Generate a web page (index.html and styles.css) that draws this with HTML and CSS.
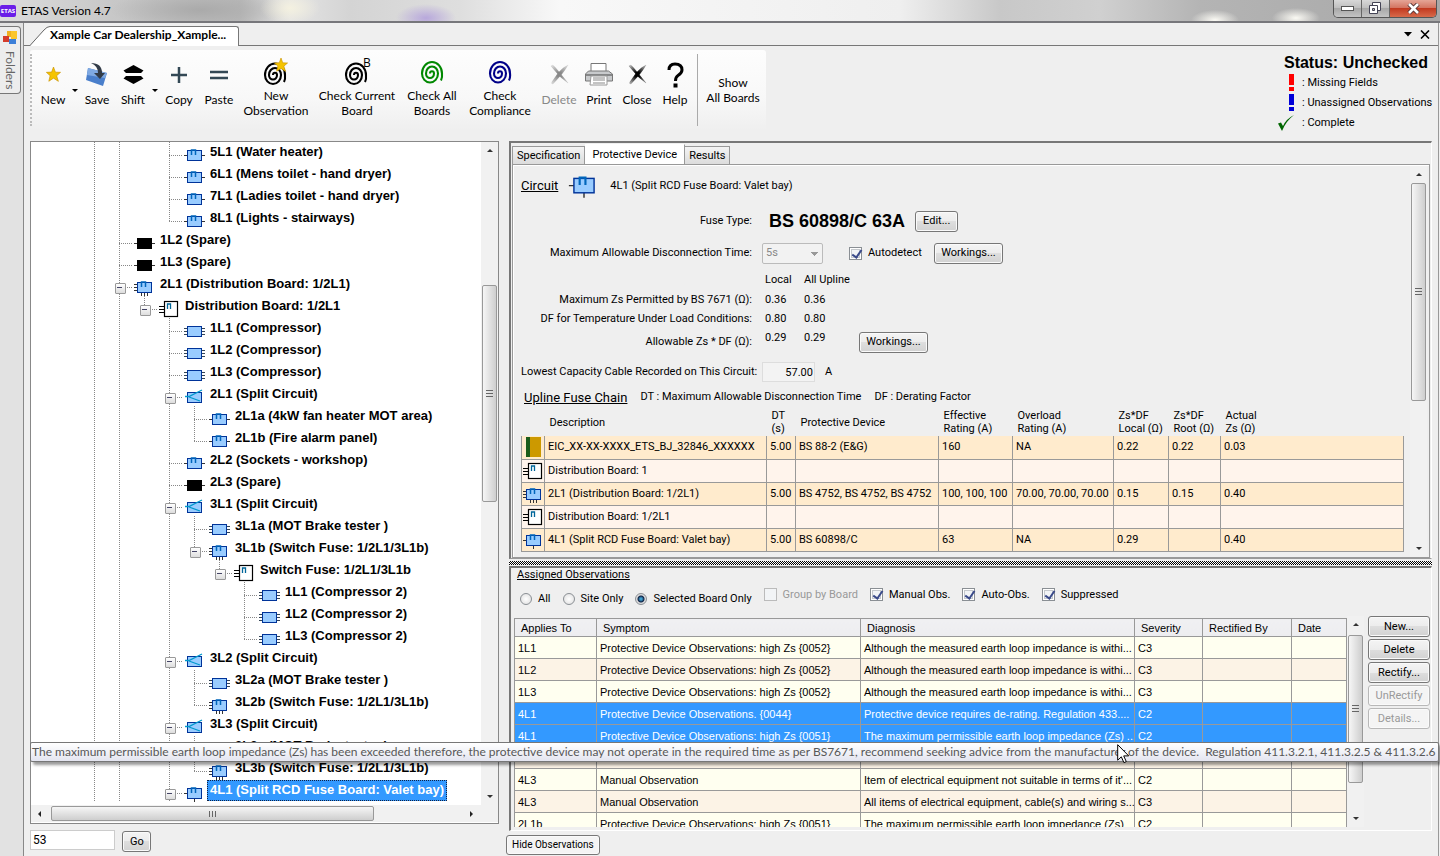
FILE: index.html
```html
<!DOCTYPE html>
<html lang="en">
<head>
<meta charset="utf-8">
<title>ETAS Version 4.7</title>
<link rel="stylesheet" href="styles.css">
</head>
<body>
<svg class="defs" aria-hidden="true">
  <symbol id="circuit" viewBox="0 0 25 22"><path d="M2 13.5h21" stroke="#333"/><rect x="5.5" y="8.5" width="14" height="10" fill="#9cf" stroke="#039"/><path d="M9.500 13V8h4v5" fill="none" stroke="#06b" stroke-width="1.500"/></symbol>
  <symbol id="way" viewBox="0 0 25 22"><path d="M2 10.500h21M2 13.500h21M2 16.500h21" stroke="#345"/><rect x="5.500" y="8.500" width="14" height="10" fill="#9cf" stroke="#039"/></symbol>
  <symbol id="dist" viewBox="0 0 25 22"><path d="M2 10.500h4M2 13.500h4M2 16.500h4M9.500 18v4M12.500 18v4M15.500 18v4" stroke="#333"/><rect x="5.500" y="8.500" width="14" height="10" fill="#9cf" stroke="#039"/><path d="M9.500 13V8h4v5" fill="none" stroke="#06b" stroke-width="1.500"/></symbol>
  <symbol id="single" viewBox="0 0 25 22"><path d="M2 13.500h4M12.500 18v4" stroke="#333"/><rect x="5.500" y="8.500" width="14" height="10" fill="#9cf" stroke="#039"/><path d="M9.500 13V8h4v5" fill="none" stroke="#06b" stroke-width="1.500"/></symbol>
  <symbol id="split" viewBox="0 0 25 22"><rect x="5.500" y="8.500" width="14" height="10" fill="#9cf" stroke="#039"/><path d="M3 12.500h4L20 6M7 13l11 4" fill="none" stroke="#09c" stroke-width="1.300"/></symbol>
  <symbol id="spare" viewBox="0 0 25 22"><path d="M2 13.500h21" stroke="#333"/><rect x="5" y="8" width="15" height="11"/></symbol>
  <symbol id="board" viewBox="0 0 25 22"><path d="M2 10.500h5M2 13.500h5M2 16.500h5" stroke="#000"/><rect x="7.500" y="5.500" width="13" height="15" fill="#fff" stroke="#000" stroke-width="1.200"/><path d="M10.500 13V8h3v5" fill="none" stroke="#069" stroke-width="1.300"/></symbol>
  <symbol id="spiral" viewBox="0 0 24 25"><path d="M10 13A2 2.300 0 0 1 14 13A4 4.500 0 0 1 6 13A6 7 0 0 1 18 13A8 9 0 0 1 2 13A10 11.500 0 0 1 22 13Q22.500 17 21 20" fill="none" stroke="currentColor" stroke-width="2.100"/></symbol>
  <symbol id="star" viewBox="0 0 16 16"><path d="M8 0l2 5.500 5.500.2-4.200 3.600 1.900 6-5.200-3.400L3 15.200l1.400-6L.4 5.700 6 5.400z" fill="#f5c400" stroke="#c99200" stroke-width=".7"/></symbol>
  <radialGradient id="fade" gradientUnits="userSpaceOnUse" cx="10" cy="11" r="13"><stop offset="0.2" stop-color="#000"/><stop offset="1" stop-color="#000" stop-opacity=".2"/></radialGradient>
  <symbol id="cross" viewBox="0 0 20 22"><path d="M1 2Q3 0 5 3L19 20 11 13.500Q7 9 1 2zM19 1Q16 6 12 11L3 21Q1 21 2 19L9 9Q13 4 19 1z" fill="url(#fade)" stroke="url(#fade)" stroke-width=".6"/></symbol>
</svg>

<header class="titlebar">
  <span class="appicon">ETAS</span><h1>ETAS Version 4.7</h1>
  <div class="winbtns">
    <button aria-label="Minimize"><svg width="13" height="6"><rect x=".5" y=".5" width="12" height="4" fill="#fff" stroke="#555"/></svg></button>
    <button aria-label="Restore"><svg width="13" height="13"><path d="M3.500.5h8v8h-8z" fill="#fff" stroke="#445"/><path d="M.5 3.500h8v8h-8z" fill="#fff" stroke="#445"/><path d="M3.500 6.500h2v2h-2z" fill="#bbb" stroke="#445"/></svg></button>
    <button class="x" aria-label="Close window"><svg width="13" height="12"><path d="M2 1l9 9M11 1l-9 9" stroke="#533" stroke-width="4.500"/><path d="M2 1l9 9M11 1l-9 9" stroke="#fff" stroke-width="2.600"/></svg></button>
  </div>
</header>

<div class="shell">
  <aside class="dock"><button class="docktab"><svg width="14" height="13"><rect x="4" width="5" height="6" fill="#f0b020"/><rect x="8" y="0" width="6" height="8" fill="#fbc62c"/><rect y="5" width="6" height="6" fill="#d43c2c"/><rect x="6" y="8" width="7" height="5" fill="#3c7fd8"/></svg><span>Folders</span></button></aside>
  <main class="main">
    <nav class="tabs">
      <svg class="slope" viewBox="0 0 20 20"><path d="M0 20L14 4Q17 .5 20 .5V20z" fill="#fff"/><path d="M0 19.500L14 4Q17 .5 20 .5" fill="none" stroke="#666"/></svg><a href="#doc" class="doctab">Xample Car Dealership_Xample...</a>
      <div class="tabtools"><button aria-label="Tab list"><svg width="9" height="5"><path d="M0 0h8L4 4.500z"/></svg></button><button aria-label="Close tab"><svg width="10" height="9"><path d="M1 .5l8 8M9 .5l-8 8" stroke="#000" stroke-width="1.600"/></svg></button></div>
    </nav>

    <div class="top">
      <div class="toolbar">
        <button class="w36"><svg width="15" height="17"><use href="#star"/></svg><span>New</span></button><i class="drop"></i>
        <button class="w36"><svg width="24" height="25" viewBox="0 0 24 25"><path d="M3 6l19 5-4 13-17-6z" fill="#4a7fcb"/><path d="M3 6l19 5-2 5L2 13z" fill="#7fa9e2"/><path d="M6 1Q17 1 17 11h3l-5 6-6-6h4Q13 4 6 1z" fill="#333c48"/></svg><span>Save</span></button>
        <button class="w36"><svg width="21" height="19"><path d="M10.500 0l10 5.500-2.500 2.500H3L.5 5.500zM10.500 19l10-5.500-2.500-2.500H3L.5 13.500z"/></svg><span>Shift</span></button><i class="drop"></i>
        <button class="w40"><svg width="18" height="18"><path d="M9 1v16M1 9h16" stroke="#334855" stroke-width="2.500"/></svg><span>Copy</span></button>
        <button class="w40"><svg width="18" height="10"><path d="M0 2h18M0 8h18" stroke="#334855" stroke-width="2.500"/></svg><span>Paste</span></button>
        <button class="w74 two"><svg width="28" height="31"><use href="#spiral" x="1" y="5" width="24" height="25"/><use href="#star" x="12" y="0" width="14" height="16"/></svg><span>New<br>Observation</span></button>
        <button class="w88 two"><svg width="28" height="31"><use href="#spiral" x="1" y="5" width="24" height="25"/><text x="20" y="10" class="bmark">B</text></svg><span>Check Current<br>Board</span></button>
        <button class="w62 two green"><svg width="24" height="26"><use href="#spiral"/></svg><span>Check All<br>Boards</span></button>
        <button class="w74 two navy"><svg width="24" height="26"><use href="#spiral"/></svg><span>Check<br>Compliance</span></button>
        <button class="w44" disabled><svg width="19" height="21"><use href="#cross"/></svg><span>Delete</span></button>
        <button class="w36"><svg width="28" height="24"><path d="M6 9V.5h15V9" fill="#fff" stroke="#777"/><path d="M.5 11l3-3h20l4 3v7H.5z" fill="#c8cacc" stroke="#777"/><path d="M1 12h26" stroke="#444"/><path d="M6 13h16v9H5z" fill="#fff" stroke="#999"/><path d="M8 15h12M8 17h12M8 20h12" stroke="#888"/></svg><span>Print</span></button>
        <button class="w40"><svg width="19" height="21"><use href="#cross"/></svg><span>Close</span></button>
        <button class="w36"><svg width="17" height="26"><path d="M2 8Q2 2 8 2Q15 2 15 8Q15 11 11 13.500Q8.500 15 8.500 19" fill="none" stroke="#000" stroke-width="3"/><rect x="6.500" y="21.500" width="4" height="4"/></svg><span>Help</span></button>
        <i class="sep"></i>
        <button class="w62 show"><span>Show<br>All Boards</span></button>
      </div>
      <div class="status">
        <h2>Status: Unchecked</h2>
        <p><svg width="16" height="18"><path d="M11 0h5v11h-5zM11 13h5v4h-5z" fill="#f00"/></svg>: Missing Fields</p>
        <p><svg width="16" height="18"><path d="M11 0h5v11h-5zM11 13h5v4h-5z" fill="#0000d8"/></svg>: Unassigned Observations</p>
        <p><svg width="16" height="18"><path d="M0 9.500l3-1 2 3.500Q8 5 16 1 8 7 4 17z" fill="#060"/></svg>: Complete</p>
      </div>
    </div>

    <div class="split">
      <section class="left">
        <div class="treebox">
          <div class="treerow">
          <ul class="tree">
            <li><i class="v"></i><i class="v"></i><i></i><i class="t"></i><svg><use href="#circuit"/></svg><span>5L1 (Water heater)</span></li>
            <li><i class="v"></i><i class="v"></i><i></i><i class="t"></i><svg><use href="#circuit"/></svg><span>6L1 (Mens toilet - hand dryer)</span></li>
            <li><i class="v"></i><i class="v"></i><i></i><i class="t"></i><svg><use href="#circuit"/></svg><span>7L1 (Ladies toilet - hand dryer)</span></li>
            <li><i class="v"></i><i class="v"></i><i></i><i class="l"></i><svg><use href="#circuit"/></svg><span>8L1 (Lights - stairways)</span></li>
            <li><i class="v"></i><i class="t"></i><svg><use href="#spare"/></svg><span>1L2 (Spare)</span></li>
            <li><i class="v"></i><i class="t"></i><svg><use href="#spare"/></svg><span>1L3 (Spare)</span></li>
            <li><i class="v"></i><i class="t x"></i><svg><use href="#dist"/></svg><span>2L1 (Distribution Board: 1/2L1)</span></li>
            <li><i class="v"></i><i class="v"></i><i class="l x"></i><svg><use href="#board"/></svg><span>Distribution Board: 1/2L1</span></li>
            <li><i class="v"></i><i class="v"></i><i></i><i class="t"></i><svg><use href="#way"/></svg><span>1L1 (Compressor)</span></li>
            <li><i class="v"></i><i class="v"></i><i></i><i class="t"></i><svg><use href="#way"/></svg><span>1L2 (Compressor)</span></li>
            <li><i class="v"></i><i class="v"></i><i></i><i class="t"></i><svg><use href="#way"/></svg><span>1L3 (Compressor)</span></li>
            <li><i class="v"></i><i class="v"></i><i></i><i class="t x"></i><svg><use href="#split"/></svg><span>2L1 (Split Circuit)</span></li>
            <li><i class="v"></i><i class="v"></i><i></i><i class="v"></i><i class="t"></i><svg><use href="#circuit"/></svg><span>2L1a (4kW fan heater MOT area)</span></li>
            <li><i class="v"></i><i class="v"></i><i></i><i class="v"></i><i class="l"></i><svg><use href="#circuit"/></svg><span>2L1b (Fire alarm panel)</span></li>
            <li><i class="v"></i><i class="v"></i><i></i><i class="t"></i><svg><use href="#circuit"/></svg><span>2L2 (Sockets - workshop)</span></li>
            <li><i class="v"></i><i class="v"></i><i></i><i class="t"></i><svg><use href="#spare"/></svg><span>2L3 (Spare)</span></li>
            <li><i class="v"></i><i class="v"></i><i></i><i class="t x"></i><svg><use href="#split"/></svg><span>3L1 (Split Circuit)</span></li>
            <li><i class="v"></i><i class="v"></i><i></i><i class="v"></i><i class="t"></i><svg><use href="#way"/></svg><span>3L1a (MOT Brake tester )</span></li>
            <li><i class="v"></i><i class="v"></i><i></i><i class="v"></i><i class="l x"></i><svg><use href="#dist"/></svg><span>3L1b (Switch Fuse: 1/2L1/3L1b)</span></li>
            <li><i class="v"></i><i class="v"></i><i></i><i class="v"></i><i></i><i class="l x"></i><svg><use href="#board"/></svg><span>Switch Fuse: 1/2L1/3L1b</span></li>
            <li><i class="v"></i><i class="v"></i><i></i><i class="v"></i><i></i><i></i><i class="t"></i><svg><use href="#way"/></svg><span>1L1 (Compressor 2)</span></li>
            <li><i class="v"></i><i class="v"></i><i></i><i class="v"></i><i></i><i></i><i class="t"></i><svg><use href="#way"/></svg><span>1L2 (Compressor 2)</span></li>
            <li><i class="v"></i><i class="v"></i><i></i><i class="v"></i><i></i><i></i><i class="l"></i><svg><use href="#way"/></svg><span>1L3 (Compressor 2)</span></li>
            <li><i class="v"></i><i class="v"></i><i></i><i class="t x"></i><svg><use href="#split"/></svg><span>3L2 (Split Circuit)</span></li>
            <li><i class="v"></i><i class="v"></i><i></i><i class="v"></i><i class="t"></i><svg><use href="#way"/></svg><span>3L2a (MOT Brake tester )</span></li>
            <li><i class="v"></i><i class="v"></i><i></i><i class="v"></i><i class="l"></i><svg><use href="#dist"/></svg><span>3L2b (Switch Fuse: 1/2L1/3L1b)</span></li>
            <li><i class="v"></i><i class="v"></i><i></i><i class="t x"></i><svg><use href="#split"/></svg><span>3L3 (Split Circuit)</span></li>
            <li><i class="v"></i><i class="v"></i><i></i><i class="v"></i><i class="t"></i><svg><use href="#way"/></svg><span>3L3a (MOT Brake tester )</span></li>
            <li><i class="v"></i><i class="v"></i><i></i><i class="v"></i><i class="l"></i><svg><use href="#dist"/></svg><span>3L3b (Switch Fuse: 1/2L1/3L1b)</span></li>
            <li><i class="v"></i><i class="v"></i><i></i><i class="t x"></i><svg><use href="#single"/></svg><span class="sel">4L1 (Split RCD Fuse Board: Valet bay)</span></li>
          </ul>
          <div class="sb"><b class="up"></b><div class="track treetrack"><div class="thumb"><i></i></div></div><b class="dn"></b></div>
          </div>
          <div class="sb hz"><b class="lt"></b><div class="track"><div class="thumb"><i></i></div></div><b class="rt"></b></div>
        </div>
        <form class="goto"><input type="text" value="53" aria-label="Item number"><button type="button" class="btn">Go</button></form>
      </section>

      <section class="right">
        <div class="panel upper">
          <div class="subtabs"><button>Specification</button><button class="on">Protective Device</button><button>Results</button></div>
          <div class="page">
            <div class="content">
              <div class="frow circ"><h3>Circuit</h3><svg width="36" height="32"><use href="#single"/></svg><span>4L1 (Split RCD Fuse Board: Valet bay)</span></div>
              <div class="frow h32"><span class="lab">Fuse Type:</span><strong>BS 60898/C 63A</strong><button class="btn">Edit...</button></div>
              <div class="frow h32"><label class="lab" for="dt">Maximum Allowable Disconnection Time:</label><select id="dt" disabled><option>5s</option></select><label class="auto"><input type="checkbox" checked>Autodetect</label><button class="btn wide">Workings...</button></div>
              <div class="frow h20"><span class="lab"></span><span class="val">Local</span><span>All Upline</span></div>
              <div class="frow h20"><span class="lab">Maximum Zs Permitted by BS 7671 (Ω):</span><span class="val">0.36</span><span class="val">0.36</span></div>
              <div class="frow h20"><span class="lab">DF for Temperature Under Load Conditions:</span><span class="val">0.80</span><span class="val">0.80</span></div>
              <div class="frow h28"><span class="lab">Allowable Zs * DF (Ω):</span><span class="val hi">0.29</span><span class="val hi">0.29</span><button class="btn wide alz">Workings...</button></div>
              <div class="frow h32"><label class="lab" for="cap">Lowest Capacity Cable Recorded on This Circuit:</label><input id="cap" type="text" value="57.00" readonly><span>A</span></div>
              <div class="frow chain"><h3>Upline Fuse Chain</h3><span>DT : Maximum Allowable Disconnection Time</span><span>DF : Derating Factor</span></div>
              <table class="fuses">
                <colgroup><col class="c23"><col class="c222"><col class="c29"><col class="c143"><col class="c74"><col class="c101"><col class="c55"><col class="c52"><col></colgroup>
                <thead><tr><th></th><th>Description</th><th>DT<br>(s)</th><th>Protective Device</th><th>Effective<br>Rating (A)</th><th>Overload<br>Rating (A)</th><th>Zs*DF<br>Local (Ω)</th><th>Zs*DF<br>Root (Ω)</th><th>Actual<br>Zs (Ω)</th></tr></thead>
                <tbody>
                <tr><td><svg><rect x="4" y="1" width="4" height="20" fill="#1a5c1a"/><rect x="8" y="1" width="11" height="20" fill="#c90"/></svg></td><td>EIC_XX-XX-XXXX_ETS_BJ_32846_XXXXXX</td><td>5.00</td><td>BS 88-2 (E&amp;G)</td><td>160</td><td>NA</td><td>0.22</td><td>0.22</td><td>0.03</td></tr>
                <tr><td><svg viewBox="1 2 22 22"><use href="#board" width="25" height="22"/></svg></td><td>Distribution Board: 1</td><td></td><td></td><td></td><td></td><td></td><td></td><td></td></tr>
                <tr><td><svg viewBox="1 2 22 22"><use href="#dist" width="25" height="22"/></svg></td><td>2L1 (Distribution Board: 1/2L1)</td><td>5.00</td><td>BS 4752, BS 4752, BS 4752</td><td>100, 100, 100</td><td>70.00, 70.00, 70.00</td><td>0.15</td><td>0.15</td><td>0.40</td></tr>
                <tr><td><svg viewBox="1 2 22 22"><use href="#board" width="25" height="22"/></svg></td><td>Distribution Board: 1/2L1</td><td></td><td></td><td></td><td></td><td></td><td></td><td></td></tr>
                <tr><td><svg viewBox="1 2 22 22"><use href="#single" width="25" height="22"/></svg></td><td>4L1 (Split RCD Fuse Board: Valet bay)</td><td>5.00</td><td>BS 60898/C</td><td>63</td><td>NA</td><td>0.29</td><td></td><td>0.40</td></tr>
                </tbody>
              </table>
            </div>
            <div class="sb"><b class="up"></b><div class="track pagetrack"><div class="thumb"><i></i></div></div><b class="dn"></b></div>
          </div>
        </div>
        <div class="splitter"></div>
        <div class="panel lower">
          <h4>Assigned Observations</h4>
          <div class="filters">
            <label><input type="radio" name="scope">All</label>
            <label><input type="radio" name="scope">Site Only</label>
            <label><input type="radio" name="scope" checked>Selected Board Only</label>
            <label class="k off"><input type="checkbox" disabled>Group by Board</label>
            <label class="k"><input type="checkbox" checked>Manual Obs.</label>
            <label class="k"><input type="checkbox" checked>Auto-Obs.</label>
            <label class="k"><input type="checkbox" checked>Suppressed</label>
          </div>
          <div class="obsrow">
            <div class="obswrap">
            <table class="obs">
              <colgroup><col class="c82"><col class="c264"><col class="c274"><col class="c68"><col class="c89"><col></colgroup>
              <thead><tr><th>Applies To</th><th>Symptom</th><th>Diagnosis</th><th>Severity</th><th>Rectified By</th><th>Date</th></tr></thead>
              <tbody>
              <tr><td>1L1</td><td>Protective Device Observations: high Zs {0052}</td><td>Although the measured earth loop impedance is withi...</td><td>C3</td><td></td><td></td></tr>
              <tr><td>1L2</td><td>Protective Device Observations: high Zs {0052}</td><td>Although the measured earth loop impedance is withi...</td><td>C3</td><td></td><td></td></tr>
              <tr><td>1L3</td><td>Protective Device Observations: high Zs {0052}</td><td>Although the measured earth loop impedance is withi...</td><td>C3</td><td></td><td></td></tr>
              <tr class="sel"><td>4L1</td><td>Protective Device Observations. {0044}</td><td>Protective device requires de-rating. Regulation 433....</td><td>C2</td><td></td><td></td></tr>
              <tr class="sel"><td>4L1</td><td>Protective Device Observations: high Zs {0051}</td><td>The maximum permissible earth loop impedance (Zs) ...</td><td>C2</td><td></td><td></td></tr>
              <tr><td></td><td></td><td></td><td></td><td></td><td></td></tr>
              <tr><td>4L3</td><td>Manual Observation</td><td>Item of electrical equipment not suitable in terms of it'...</td><td>C2</td><td></td><td></td></tr>
              <tr><td>4L3</td><td>Manual Observation</td><td>All items of electrical equipment, cable(s) and wiring s...</td><td>C3</td><td></td><td></td></tr>
              <tr><td>2L1b</td><td>Protective Device Observations: high Zs {0051}</td><td>The maximum permissible earth loop impedance (Zs)</td><td>C2</td><td></td><td></td></tr>
              </tbody>
            </table>
            </div>
            <div class="sb"><b class="up"></b><div class="track obstrack"><div class="thumb"><i></i></div></div><b class="dn"></b></div>
            <div class="acts"><button class="btn">New...</button><button class="btn">Delete</button><button class="btn">Rectify...</button><button class="btn" disabled>UnRectify</button><button class="btn" disabled>Details...</button></div>
          </div>
        </div>
        <div class="foot"><button class="btn">Hide Observations</button></div>
      </section>
    </div>
  </main>
</div>
<div class="tip" role="tooltip">The maximum permissible earth loop impedance (Zs) has been exceeded therefore, the protective device may not operate in the required time as per BS7671, recommend seeking advice from the manufacturer of the device.&nbsp; Regulation 411.3.2.1, 411.3.2.5 &amp; 411.3.2.6</div>
<svg class="cursor" width="13" height="20"><path d="M.7.7v15.500l3.600-3.400 2.600 5.800 2.400-1-2.600-5.700h5z" fill="#fff" stroke="#000"/></svg>
</body>
</html>
```
FILE: styles.css
```css
* { box-sizing: border-box; }
body { margin: 0; height: 100vh; display: flex; flex-direction: column; overflow: hidden; background: #efefef; color: #000; font: 11px/14px Roboto, "Liberation Sans", sans-serif; }
h1, h2, h3, h4, p, ul { margin: 0; padding: 0; font-weight: normal; }
button, input, select { font: inherit; color: inherit; margin: 0; }
button { border: 0; background: none; padding: 0; white-space: nowrap; }
svg { display: block; flex: none; }
.defs { position: absolute; width: 0; height: 0; }

.titlebar { flex: none; height: 23px; display: flex; align-items: center; border-bottom: 2px solid #77777b; overflow: hidden;
  background: radial-gradient(ellipse 30px 14px at 426px 18px, #b8a8dc, transparent), radial-gradient(ellipse 30px 16px at 290px 8px, #f4f1e0, transparent), radial-gradient(ellipse 24px 10px at 1215px 20px, #fbfaf4, transparent), radial-gradient(ellipse 24px 10px at 1296px 18px, #fbfaf4, transparent), radial-gradient(ellipse 90px 20px at 200px 10px, #aaa, transparent), linear-gradient(90deg, #dcdcdc, #c8c8c8 110px, #bbb 240px, #e4e4e4 290px, #d4d4d4 350px, #dedede 460px, #f8f8f8 560px, #efefef 900px, #c8c8c8 1000px, #d0d0d0 1100px, #b4b4b4 1200px, #a8a8a8); }
.titlebar h1 { font: 12px/16px Lato, sans-serif; }
.appicon { width: 16px; height: 12px; margin-right: 5px; background: #6a1ee8; color: #fff; font: bold 6px/12px "Open Sans", sans-serif; text-align: center; border-radius: 2px; }
.winbtns { margin-left: auto; margin-right: 3px; align-self: flex-start; display: flex; height: 18px; border: 1px solid #555; border-top: 0; border-radius: 0 0 5px 5px; overflow: hidden; }
.winbtns button { width: 28px; display: flex; align-items: center; justify-content: center; background: linear-gradient(#d8d8d8, #bdbdbd 50%, #a8a8a8 50%, #c4c4c4); border-right: 1px solid #666; }
.winbtns .x { width: 46px; border: 0; background: linear-gradient(#e5a596, #d2705c 50%, #c23a20 50%, #d86a4a); }

.shell { flex: 1; min-height: 0; display: flex; }
.dock { width: 24px; flex: none; background: #e2e2e2; border-right: 1px solid #888; padding-top: 3px; }
.docktab { width: 21px; height: 68px; border: 1px solid #777; border-left: 0; border-radius: 0 4px 4px 0; background: #ededed; display: flex; flex-direction: column; align-items: center; gap: 7px; padding-top: 4px; color: #666; font: 12px/14px Lato, sans-serif; }
.docktab span { writing-mode: vertical-rl; }
.main { flex: 1; min-width: 0; display: flex; flex-direction: column; border-right: 1px solid #999; margin-right: 1px; }
.tabs { height: 23px; flex: none; display: flex; align-items: flex-end; padding-left: 6px; border-bottom: 1px solid #777; }
.doctab { background: #fff; height: 20px; margin-bottom: -1px; padding: 0 12px 0 0; border: 1px solid #777; border-width: 1px 1px 0 0; border-radius: 0 3px 0 0; font: bold 12px/16px Lato, sans-serif; color: #000; text-decoration: none; }
.slope { height: 20px; width: 20px; margin-bottom: -1px; }
.tabtools { margin-left: auto; align-self: center; display: flex; align-items: center; gap: 7px; padding-right: 8px; }

.top { flex: none; display: flex; justify-content: space-between; padding: 4px 10px 0 6px; height: 95px; }
.toolbar { display: flex; align-items: stretch; height: 80px; padding: 4px 2px 4px 4px; background: linear-gradient(#fdfdfd, #f8f8f8 60%, #efefef); font: 12px/15px Lato, sans-serif; border-radius: 3px; }
.toolbar::before { content: ""; border-left: 2px dotted #bbb; height: 72px; margin-left: -4px; margin-right: 3px; }
.toolbar button { display: flex; flex-direction: column; align-items: center; padding-top: 3px; height: 72px; }
.toolbar button svg { margin: auto; }
.toolbar button span { flex: none; margin-bottom: 19px; }
.toolbar .two span { margin-bottom: 8px; }
.toolbar .show { justify-content: center; }
.toolbar .show span { margin: 0 0 4px; }
.toolbar button:disabled { color: #888; }
.toolbar button:disabled svg { opacity: .45; }
.green svg { color: #080; } .navy svg { color: #008; }
.w36 { width: 36px; } .w40 { width: 40px; } .w44 { width: 44px; } .w62 { width: 62px; } .w74 { width: 74px; } .w88 { width: 88px; }
.drop { align-self: center; border: 3px solid transparent; border-top-color: #000; border-bottom: 0; margin: 0 1px; width: 6px; height: 3px; }
.sep { border-left: 1px solid #aaa; margin: 0 4px; }
.bmark { font: 12px "Open Sans", sans-serif; }
.status { width: 150px; padding-top: 3px; }
.status h2 { font: bold 16px/20px "Liberation Sans", Arial, sans-serif; text-align: right; white-space: nowrap; }
.status p { display: flex; align-items: center; gap: 8px; height: 20px; white-space: nowrap; }

.split { flex: 1; min-height: 0; display: flex; gap: 10px; padding: 0 6px 0 6px; }
.left { width: 469px; flex: none; display: flex; flex-direction: column; }
.treebox { flex: 1; min-height: 0; background: #fff; border: 1px solid #888; display: flex; flex-direction: column; }
.treerow { flex: 1; min-height: 0; display: flex; overflow: hidden; }
.tree { flex: 1; list-style: none; padding-left: 51px; font: bold 13px/20px "Liberation Sans", Arial, sans-serif; overflow: hidden; }
.tree li { display: flex; height: 22px; white-space: nowrap; }
.tree svg { width: 25px; height: 22px; }
.tree span { height: 21px; padding: 0 3px; }
.tree .sel { background: #39f; color: #fff; outline: 1px dotted #124; outline-offset: -1px; }
.tree i { width: 25px; flex: none; position: relative; }
.tree .v, .tree .t { background: repeating-linear-gradient(#888 0 1px, transparent 1px 2px) 12px 0 / 1px 100% no-repeat; }
.tree .l { background: repeating-linear-gradient(#888 0 1px, transparent 1px 2px) 12px 0 / 1px 14px no-repeat; }
.tree .t::before, .tree .l::before { content: ""; position: absolute; left: 12px; right: 0; top: 13px; height: 1px; background: repeating-linear-gradient(90deg, #888 0 1px, transparent 1px 2px); }
.tree .x::after { content: ""; position: absolute; left: 8px; top: 9px; width: 9px; height: 9px; border: 1px solid #999; border-radius: 1px; background: linear-gradient(#446, #446) 1px 3px / 5px 1px no-repeat, linear-gradient(#fff, #ddd); }
.goto { flex: none; height: 32px; display: flex; align-items: flex-start; padding-top: 6px; gap: 7px; }
.goto input { width: 85px; height: 20px; border: 1px solid #ccc; background: #fff; padding: 0 2px; font-size: 12px; }
.goto .btn { width: 29px; margin-top: 1px; }

.btn { height: 21px; padding: 0 7px; border: 1px solid #777; border-radius: 3px; background: linear-gradient(#f4f4f4, #ececec 50%, #dedede 50%, #d2d2d2); box-shadow: inset 0 0 0 1px #fafafa; }
.btn:disabled { color: #999; border-color: #b8b8b8; background: #f4f4f4; }
.btn.wide { width: 69px; padding: 0; }

.sb { width: 17px; flex: none; background: #f1f1f1; display: flex; flex-direction: column; align-items: center; }
.sb b { width: 17px; height: 17px; flex: none; display: flex; align-items: center; justify-content: center; }
.sb b::after { content: ""; border: 3px solid transparent; }
.up::after { border-bottom-color: #333 !important; border-top: 0 !important; }
.dn::after { border-top-color: #333 !important; border-bottom: 0 !important; }
.lt::after { border-right-color: #222 !important; border-left: 0 !important; }
.rt::after { border-left-color: #222 !important; border-right: 0 !important; }
.track { flex: 1; display: flex; flex-direction: column; align-items: center; min-height: 0; }
.thumb { width: 15px; border: 1px solid #999; border-radius: 2px; background: linear-gradient(90deg, #f6f6f6, #e4e4e4 45%, #cecece); display: flex; align-items: center; justify-content: center; }
.thumb i { width: 7px; height: 8px; background: repeating-linear-gradient(#666 0 1px, transparent 1px 3px); }
.treetrack { padding-top: 126px; } .treetrack .thumb { height: 217px; }
.pagetrack .thumb { height: 218px; }
.obstrack { padding-top: 2px; } .obstrack .thumb { height: 148px; }
.hz { width: auto; height: 17px; flex-direction: row; padding-right: 18px; margin-bottom: 1px; }
.hz .track { flex-direction: row; padding-left: 3px; }
.hz .thumb { width: 323px; height: 15px; background: linear-gradient(#f6f6f6, #e4e4e4 45%, #cecece); }
.hz .thumb i { width: 8px; height: 6px; background: repeating-linear-gradient(90deg, #666 0 1px, transparent 1px 3px); }

.right { flex: 1; min-width: 0; display: flex; flex-direction: column; }
.panel { border: 1px solid #fff; border-top: 2px solid #777; border-left: 2px solid #777; }
.upper { flex: 1; min-height: 0; display: flex; flex-direction: column; padding: 1px 1px 0 1px; border-bottom-color: #999; }
.subtabs { height: 20px; flex: none; display: flex; align-items: flex-end; }
.subtabs button { height: 18px; padding: 0 4px; border: 1px solid #999; border-bottom: 0; background: linear-gradient(#f4f4f4, #dcdcdc); }
.subtabs button + button { border-left: 0; }
.subtabs .on { height: 20px; padding: 0 7px; background: #fff; border-color: #fff #999 #fff #fff; }
.page { flex: 1; min-height: 0; display: flex; border: 1px solid #999; box-shadow: inset 1px 1px #fff; padding: 1px 2px 0 8px; }
.content { flex: 1; min-width: 0; overflow: hidden; }
.content h3 { font-size: 13px; line-height: 15px; text-decoration: underline; }
.frow { display: flex; align-items: center; white-space: nowrap; gap: 13px; }
.circ { height: 39px; gap: 8px; }
.circ svg { align-self: flex-start; }
.h32 { height: 32px; } .h28 { height: 28px; } .h20 { height: 19px; }
.h32 + .h20 { height: 21px; }
.lab { width: 231px; flex: none; text-align: right; }
.val { width: 26px; } .hi { align-self: flex-start; padding-top: 3px; }
.frow strong { font: bold 18px/20px "Liberation Sans", Arial, sans-serif; margin-left: 4px; margin-right: -3px; }
select { appearance: none; width: 61px; height: 21px; margin-left: -3px; padding: 0 3px; border: 1px solid #bbb; border-radius: 2px; color: #888; opacity: 1; background: linear-gradient(#999, #999) 48px 8px / 7px 1px no-repeat, linear-gradient(#999, #999) 49px 9px / 5px 1px no-repeat, linear-gradient(#999, #999) 50px 10px / 3px 1px no-repeat, linear-gradient(#999, #999) 51px 11px / 1px 1px no-repeat, #f2f2f2; }
.auto { display: flex; align-items: center; gap: 6px; margin-left: 13px; width: 72px; }
.frow input[type=text] { width: 53px; height: 20px; margin-left: -3px; margin-right: -3px; border: 1px solid #ddd; background: #f3f3f3; text-align: right; padding: 0 1px; }
.alz { margin-left: 16px; }
.chain { height: 18px; padding-left: 3px; margin-bottom: 2px; }
input[type=checkbox] { appearance: none; flex: none; width: 13px; height: 13px; border: 1px solid #8a8f94; background: #f2f4f6; box-shadow: inset 0 0 0 1px #fff, inset 0 0 0 2px #c4c8cc; position: relative; }
input[type=checkbox]:checked::after { content: ""; position: absolute; left: 4px; top: 0; width: 4px; height: 8px; border: solid #3a4a8a; border-width: 0 2px 2px 0; transform: rotate(35deg); }
input[type=checkbox]:disabled { border-color: #bbb; box-shadow: none; }
input[type=radio] { appearance: none; flex: none; width: 12px; height: 12px; border: 1px solid #8a8f94; border-radius: 50%; background: radial-gradient(#fff, #ddd); }
input[type=radio]:checked { background: radial-gradient(#3fa0d0 0 1px, #124 3px, #ddd 4px); }

table { border-collapse: collapse; table-layout: fixed; }
th { font-weight: normal; text-align: left; }
td, th { white-space: nowrap; overflow: hidden; padding: 0 3px; }
.fuses { width: calc(100% - 6px); }
.fuses th { height: 28px; line-height: 13px; padding: 0 5px; }
.fuses td { height: 23px; border: 1px solid #999; background: #fff4ec; padding: 0 0 0 3px; }
.fuses tr:first-child td { border-top: 0; }
.fuses tr:nth-child(odd) td { background: #ffebcd; }
.fuses td:first-child { padding: 0; }
.fuses svg { width: 22px; height: 22px; }
.c23 { width: 23px; } .c222 { width: 222px; } .c29 { width: 29px; } .c143 { width: 143px; } .c74 { width: 74px; } .c101 { width: 101px; } .c55 { width: 55px; } .c52 { width: 52px; }
.c82 { width: 82px; } .c264 { width: 264px; } .c274 { width: 274px; } .c68 { width: 68px; } .c89 { width: 89px; }

.splitter { height: 4px; margin: 2px 0 1px; flex: none; background: repeating-conic-gradient(#000 0 25%, #fff 0 50%) 0 0 / 2px 2px; }
.lower { flex: 0 0 265px; display: flex; flex-direction: column; padding: 0 1px 3px 3px; min-height: 0; }
.lower h4 { text-decoration: underline; font-size: 11px; padding-left: 3px; line-height: 13px; }
.filters { display: flex; height: 35px; align-items: center; padding-left: 6px; gap: 12px; }
.filters label { display: flex; align-items: center; gap: 6px; white-space: nowrap; }
.filters .k { margin-bottom: 8px; }
.off { color: #999; }
.obsrow { flex: 1; min-height: 0; display: flex; }
.obswrap { flex: 1; min-width: 0; overflow: hidden; margin-top: 2px; }
.obs { width: 100%; font-family: "Liberation Sans", Arial, sans-serif; }
.obs th { height: 18px; border: 1px solid #999; padding: 0 6px; background: linear-gradient(#f0f0f2, #ededf0); }
.obs td { height: 22px; border: 1px solid #999; background: #fffff0; padding: 0 0 0 3px; }
.obs tbody tr:nth-child(even) td { background: #fcf3e6; }
.obs tbody .sel td { background: #39f !important; color: #fff; }
.acts { display: flex; flex-direction: column; gap: 2px; width: 62px; margin-left: 4px; }
.acts .btn { padding: 0; width: 62px; }
.foot { flex: none; height: 25px; padding-top: 4px; margin-left: -3px; }
.foot .btn { height: 20px; font-size: 10px; padding: 0 5px; background: #f4f4f4; }

.tip { position: absolute; left: 30px; right: 1px; bottom: 94px; height: 20px; padding: 0 1px; border: 1px solid #777; border-radius: 2px; background: linear-gradient(#fff, #e4e5f0); box-shadow: 3px 3px 3px #0006; color: #575757; font: 12px/18px Lato, sans-serif; white-space: nowrap; overflow: hidden; }
.cursor { position: absolute; left: 1117px; top: 744px; }
```
